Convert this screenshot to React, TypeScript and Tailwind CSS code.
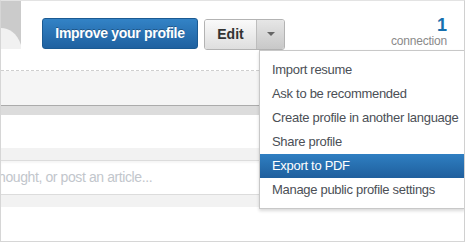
import React from "react";

const menuItems = [
  "Import resume",
  "Ask to be recommended",
  "Create profile in another language",
  "Share profile",
  "Export to PDF",
  "Manage public profile settings",
];

function AvatarCorner() {
  return (
    <svg width="20" height="48" viewBox="0 0 20 48" className="block">
      <rect width="20" height="48" fill="#cbcbcb" />
      <path d="M0 27 C8 27 16 32 20 44 L20 48 L0 48 Z" fill="#f1f1f1" />
    </svg>
  );
}

export default function App() {
  return (
    <div className="relative w-[465px] h-[242px] overflow-hidden bg-white font-['Liberation_Sans',Arial,sans-serif] border-t border-l border-b border-r border-t-[#e3e3e3] border-l-[#d6d6d6] border-b-[#d6d6d6] border-r-[#d0d0d0]">
      {/* header */}
      <div className="flex items-start h-[69px]">
        <AvatarCorner />
        <button className="ml-[21px] mt-[17px] w-[156px] h-[31px] rounded-[3px] border border-[#1b5a92] bg-gradient-to-b from-[#3383c6] to-[#1f61a0] text-white text-[14px] font-bold tracking-[-0.3px] whitespace-nowrap [text-shadow:0_-1px_0_rgba(0,0,0,0.3)]">
          Improve your profile
        </button>
        <div className="ml-[6px] mt-[18px] flex h-[31px] rounded-[3px] border border-[#b3b3b3] overflow-hidden">
          <div className="w-[51px] flex items-center justify-center bg-gradient-to-b from-[#fafafa] to-[#dedede] text-[14px] font-bold text-[#333]">
            Edit
          </div>
          <div className="w-[28px] flex items-center justify-center border-l border-[#bdbdbd] bg-gradient-to-b from-[#e6e6e6] to-[#c8c8c8]">
            <svg width="8" height="5" viewBox="0 0 8 5">
              <path d="M0 0 L8 0 L4 4 Z" fill="#666" />
            </svg>
          </div>
        </div>
        <div className="ml-auto mr-[17px] mt-[15px] flex flex-col items-end">
          <span className="text-[18px] leading-[18px] font-bold text-[#166fae]">1</span>
          <span className="text-[12px] leading-[14px] text-[#8a8a8a] tracking-[-0.2px]">connection</span>
        </div>
      </div>

      {/* body bands */}
      <div className="border-t border-dashed border-[#cfcfcf]" />
      <div className="h-[35px] bg-[#f5f5f5] border-b border-[#ababab]" />
      <div className="h-[9px] bg-[#dcdcdc]" />
      <div className="h-[33px] bg-white" />
      <div className="h-[13px] bg-[#f2f2f2] border-b border-[#dcdcdc]" />
      <div className="h-[34px] flex items-center bg-white border-b border-[#dcdcdc] shadow-[inset_0_2px_2px_rgba(0,0,0,0.04)]">
        <span className="ml-[-3px] text-[14px] tracking-[-0.4px] text-[#c2c6cc] whitespace-nowrap">hought, or post an article...</span>
      </div>
      <div className="h-[12px] bg-[#f2f2f2]" />

      {/* dropdown menu */}
      <div className="absolute left-[258px] top-[49px] w-[206px] bg-white border border-[#c8c8c8] pt-[7px] pb-[6px] shadow-[0_2px_3px_rgba(0,0,0,0.15)]">
        {menuItems.map((item) =>
          item === "Export to PDF" ? (
            <div
              key={item}
              className="h-[24px] leading-[24px] px-[12px] text-[13px] tracking-[-0.3px] whitespace-nowrap text-white bg-gradient-to-b from-[#2f7fc2] to-[#1f5f9d]"
            >
              {item}
            </div>
          ) : (
            <div key={item} className="h-[24px] leading-[24px] px-[12px] text-[13px] tracking-[-0.3px] whitespace-nowrap text-[#4b4f56]">
              {item}
            </div>
          )
        )}
      </div>
    </div>
  );
}
